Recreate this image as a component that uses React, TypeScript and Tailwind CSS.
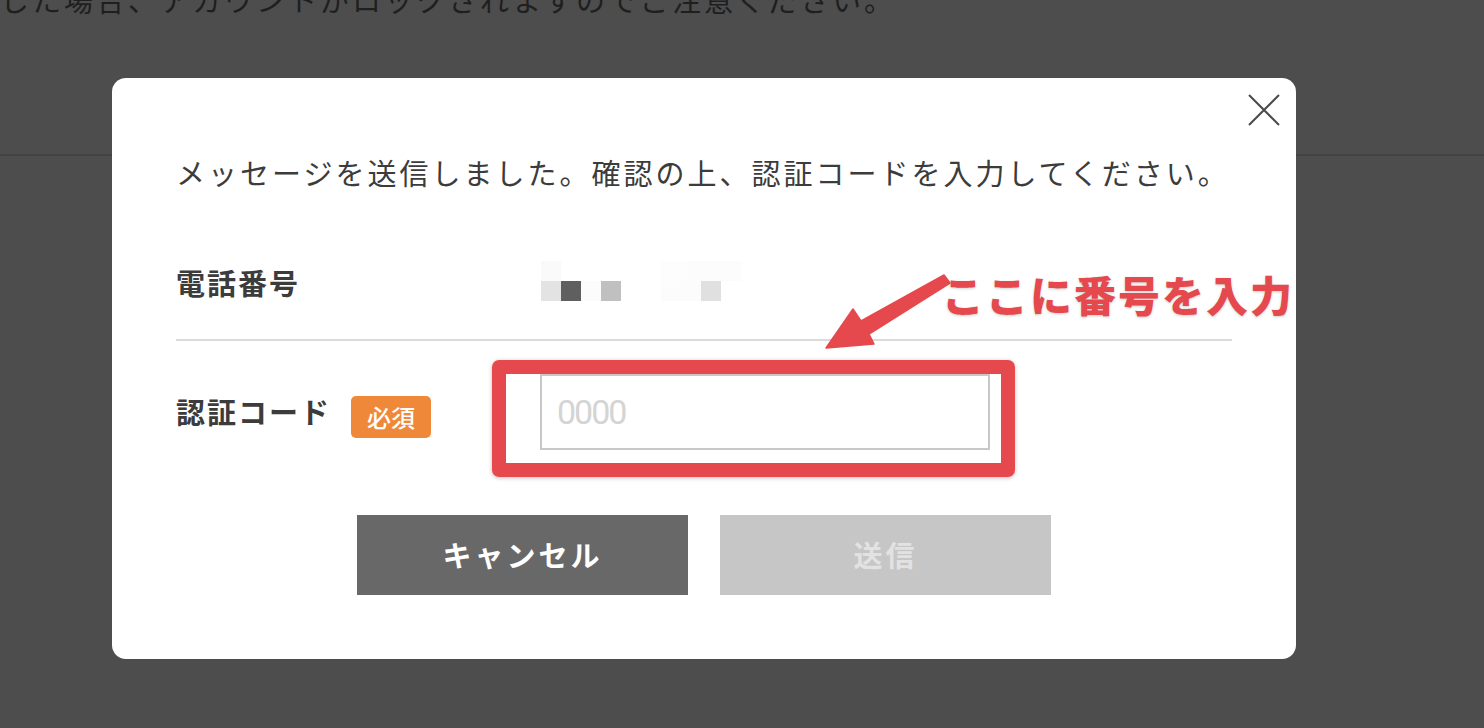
const mosaicRows: string[][] = [
  ["#fafafa", "#ffffff", "#ffffff", "#ffffff", "#ffffff", "#ffffff", "#fdfdfd", "#fcfcfc", "#fcfcfc", "#fcfcfc"],
  ["#e3e3e3", "#5f5f5f", "#fcfcfc", "#c0c0c0", "#ffffff", "#ffffff", "#fcfcfc", "#fcfcfc", "#e0e0e0", "#ffffff"],
];

function PhoneMosaic() {
  // pixelated (hidden) phone number
  return (
    <div className="ml-px -mt-2 flex flex-col">
      {mosaicRows.map((row, i) => (
        <div key={i} className="flex">
          {row.map((c, j) => (
            <div key={j} className="h-5 w-5" style={{ backgroundColor: c }} />
          ))}
        </div>
      ))}
    </div>
  );
}

function CloseIcon() {
  return (
    <svg viewBox="0 0 32 32" className="h-8 w-8" fill="none" stroke="#4a4a4a" strokeWidth="2">
      <path d="M1 1 L31 31 M31 1 L1 31" />
    </svg>
  );
}

export default function App() {
  return (
    <div className="relative h-screen overflow-hidden bg-[#4d4d4d] font-['Noto_Sans_CJK_JP',sans-serif]">
      {/* page behind the overlay */}
      <div className="flex h-[156px] flex-col border-b-2 border-[#434343]">
        <p className="mt-[-23px] whitespace-nowrap text-[29px] leading-[44px] tracking-[3px] text-[#1f1f1f]">
          した場合、アカウントがロックされますのでご注意ください。
        </p>
      </div>

      {/* modal */}
      <div className="absolute inset-0 pl-[112px] pt-[78px]">
        <div className="relative w-[1184px] rounded-[14px] bg-white px-16 pb-16 pt-[72px] text-[#3c3c3c]">
          <button className="absolute right-4 top-4">
            <CloseIcon />
          </button>

          <p className="whitespace-nowrap text-[29px] leading-[44px] tracking-[3px]">
            メッセージを送信しました。確認の上、認証コードを入力してください。
          </p>

          <div className="mt-[37px] flex h-[110px] items-center border-b-2 border-[#dadada]">
            <div className="-mt-1 w-[364px] text-[29px] font-bold tracking-[2px]">電話番号</div>
            <PhoneMosaic />
          </div>

          <div className="flex h-[142px] items-center">
            <div className="flex w-[364px] items-center">
              <span className="text-[29px] font-bold tracking-[2px]">認証コード</span>
              <span className="ml-[20px] mt-[10px] flex h-[42px] w-20 items-center justify-center rounded-[5px] bg-[#f0883a] text-[24px] font-medium leading-none text-white">
                必須
              </span>
            </div>
            <input
              type="text"
              placeholder="0000"
              className="h-[76px] w-[450px] border-2 border-[#c8c8c8] pl-[15px] font-['Roboto',sans-serif] text-[34px] tracking-[-2px] text-[#3c3c3c] outline-none placeholder:text-[#d4d4d4]"
            />
          </div>

          <div className="mt-8 flex justify-center gap-8">
            <button className="h-20 w-[331px] bg-[#686868] text-[29px] font-bold tracking-[3px] text-white">
              キャンセル
            </button>
            <button className="h-20 w-[331px] bg-[#c6c6c6] text-[29px] font-bold tracking-[3px] text-[#e2e2e2]">
              送信
            </button>
          </div>

          {/* annotations */}
          <div className="pointer-events-none absolute left-[380px] top-[282px] h-[117px] w-[523px] rounded-[7px] border-[14px] border-[#e5484d] shadow-[0_1px_4px_rgba(0,0,0,0.25)]" />
          <svg
            className="pointer-events-none absolute left-[700px] top-[180px] h-[100px] w-[150px]"
            viewBox="812 258 150 100"
          >
            <polygon
              points="826,348 853,309 861,321 944,275 950,283 869,334 874,344"
              fill="#e5484d"
              stroke="#e5484d"
              strokeWidth="1.5"
              strokeLinejoin="round"
            />
          </svg>
          <p className="pointer-events-none absolute left-[830px] top-[191px] whitespace-nowrap text-[42px] font-black leading-[50px] tracking-[2px] text-[#e5484d] [text-shadow:0_1px_3px_rgba(0,0,0,0.2)]">
            ここに番号を入力
          </p>
        </div>
      </div>
    </div>
  );
}
